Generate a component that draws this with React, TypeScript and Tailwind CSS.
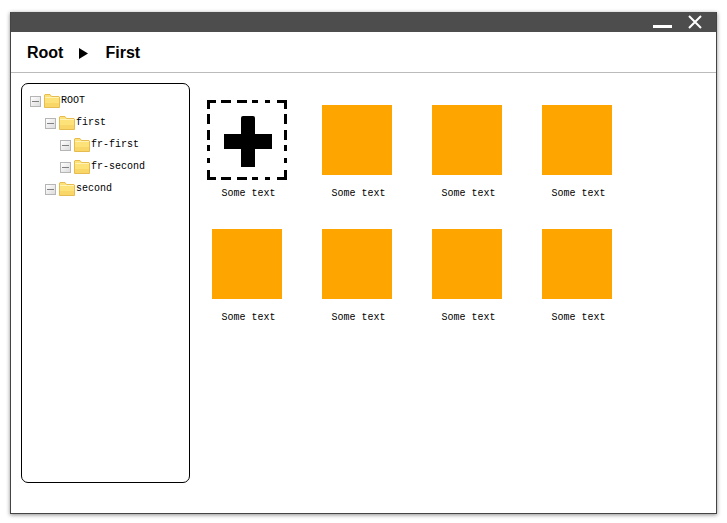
const tree = [
  { label: "ROOT", level: 0 },
  { label: "first", level: 1 },
  { label: "fr-first", level: 2 },
  { label: "fr-second", level: 2 },
  { label: "second", level: 1 },
];

const indents = ["pl-0", "pl-[15px]", "pl-[30px]"];

function Expander() {
  return (
    <div className="flex h-[11px] w-[11px] items-center justify-center border border-[#b5b5b5] bg-gradient-to-br from-white to-[#dcdcdc]">
      <div className="h-px w-[7px] bg-[#808080]"></div>
    </div>
  );
}

function Folder() {
  return (
    <svg width="16" height="14" viewBox="0 0 16 14" className="ml-[3px] mr-px">
      <path d="M0.5 13.5V1L1 0.5H6L7.5 2.5H15L15.5 3V13.5Z" fill="#fde27a" stroke="#e6bb50" />
      <rect x="1" y="3" width="14" height="1" fill="#fff3b8" />
      <rect x="1" y="9" width="14" height="4" fill="#f8d667" />
    </svg>
  );
}

function TreeRow({ label, level }: { label: string; level: number }) {
  return (
    <div className={`flex h-[22px] items-center ${indents[level]}`}>
      <Expander />
      <Folder />
      <span className="text-[10px] leading-none text-black">{label}</span>
    </div>
  );
}

function Tile() {
  return (
    <div className="flex h-[124px] flex-col items-center">
      <div className="flex h-[80px] items-center justify-center">
        <div className="h-[70px] w-[70px] bg-[#ffa500]"></div>
      </div>
      <span className="ml-[3px] mt-2 text-[10px] leading-[11px] text-black">Some text</span>
    </div>
  );
}

function AddTile() {
  const dashes = "9 5 10 6 10 5 6 7 5 7 10";
  return (
    <div className="flex h-[124px] flex-col items-center">
      <svg width="80" height="80" viewBox="0 0 80 80">
        <path d="M0 1.5H80M0 78.5H80M1.5 0V80M78.5 0V80" stroke="#000000" strokeWidth="3" strokeDasharray={dashes} fill="none" />
        <path d="M34 18Q34 16 36 16H46Q48 16 48 18V34H65V49H48V67H34V49H17V34H34Z" fill="#000000" />
      </svg>
      <span className="ml-[3px] mt-2 text-[10px] leading-[11px] text-black">Some text</span>
    </div>
  );
}

export default function App() {
  return (
    <div className="h-[523px] w-[727px] overflow-hidden bg-white pl-[10px] pt-[12px] font-['Liberation_Mono',monospace]">
      <div className="flex h-[502px] w-[707px] flex-col border-x border-b border-[#444444] bg-white shadow-[0_1px_4px_rgba(0,0,0,0.45)]">
        <div className="flex h-[20px] items-center justify-end bg-[#4d4d4d] pr-[14px]">
          <div className="mt-[9px] h-[3px] w-[19px] bg-white"></div>
          <svg width="14" height="14" viewBox="0 0 14 14" className="ml-4">
            <path d="M1 1L13 13M13 1L1 13" stroke="#ffffff" strokeWidth="2" fill="none" />
          </svg>
        </div>
        <div className="flex h-[41px] items-center border-b border-[#bbbbbb] pl-[16px] pt-[2px] font-['Liberation_Sans',sans-serif] text-base font-bold text-black">
          <span>Root</span>
          <svg width="9" height="11" viewBox="0 0 9 11" className="ml-[16px] mr-[17px]">
            <path d="M0 0L9 5.5L0 11Z" fill="#000000" />
          </svg>
          <span>First</span>
        </div>
        <div className="flex flex-1 items-start pl-[10px] pt-[10px]">
          <div className="h-[400px] w-[169px] shrink-0 rounded-[7px] border border-black pl-[8px] pt-[6px]">
            {tree.map((item) => (
              <TreeRow key={item.label} label={item.label} level={item.level} />
            ))}
          </div>
          <div className="ml-[2px] mt-[17px] grid grid-cols-[repeat(4,110px)]">
            <AddTile />
            {Array.from({ length: 7 }).map((_, i) => (
              <Tile key={i} />
            ))}
          </div>
        </div>
      </div>
    </div>
  );
}
